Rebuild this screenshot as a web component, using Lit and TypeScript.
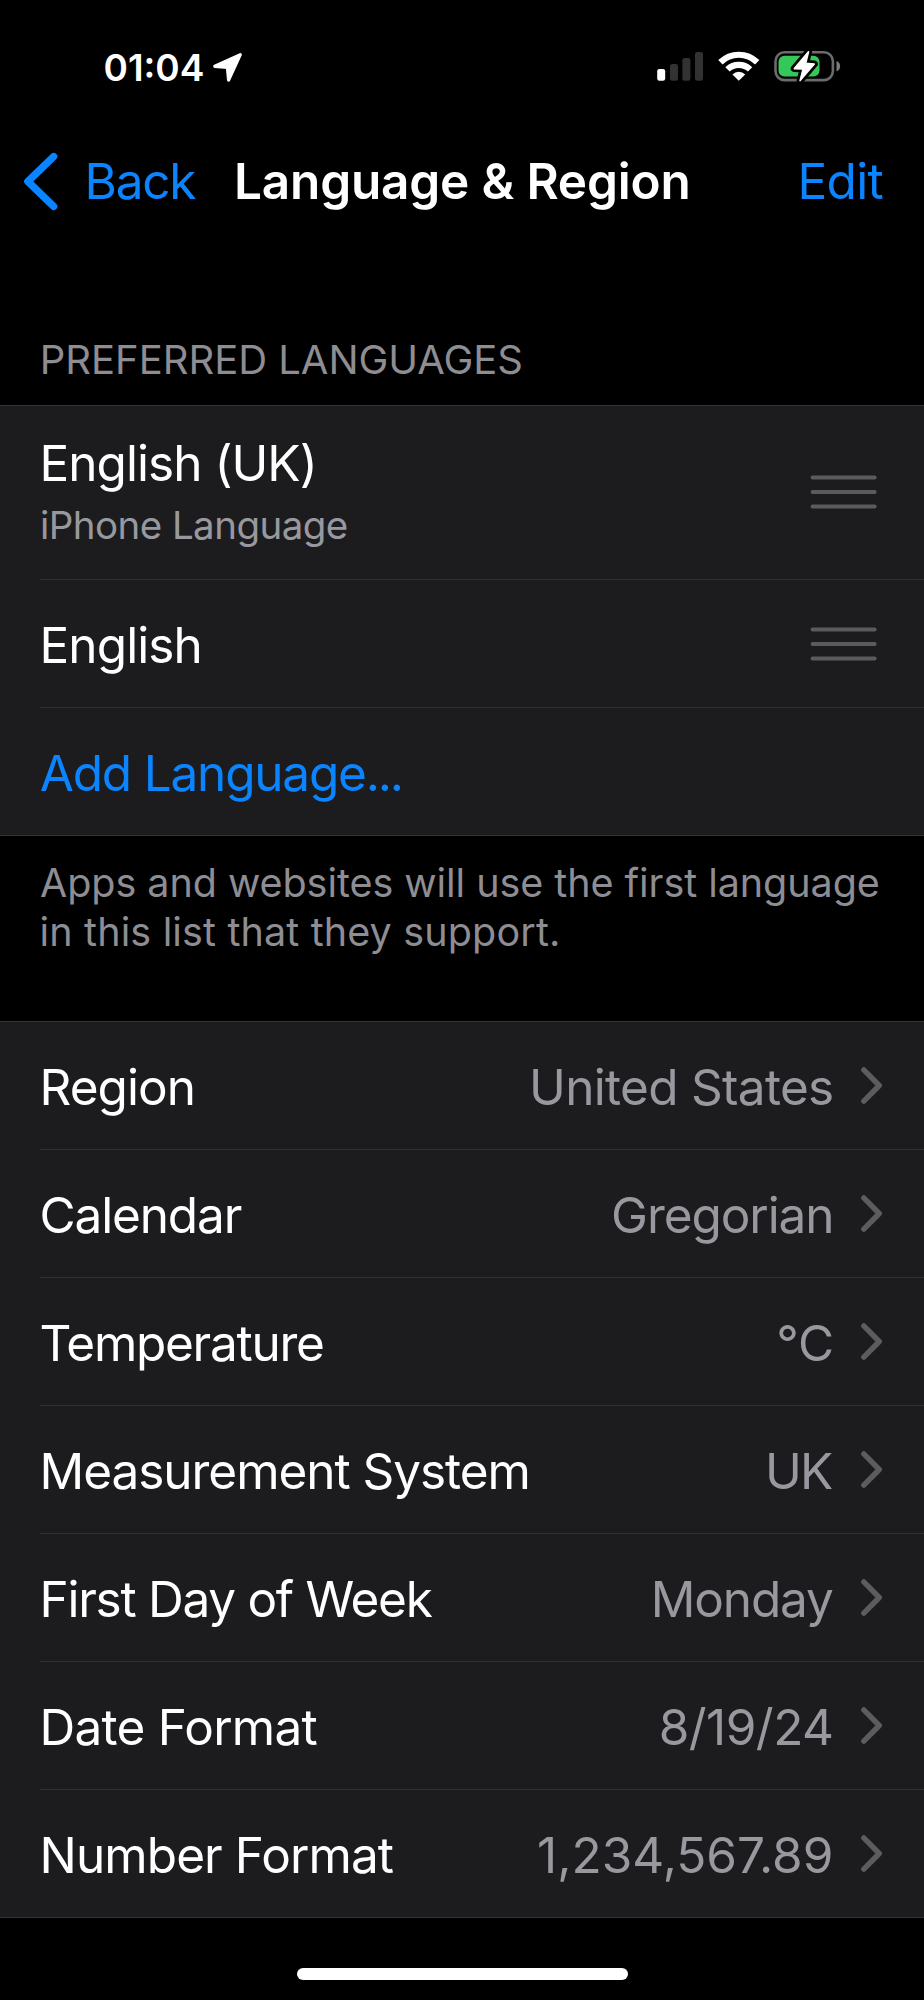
import { LitElement, html, svg, css, nothing } from "lit";
import { customElement, property } from "lit/decorators.js";
import { styleMap } from "lit/directives/style-map.js";

interface Setting {
  label: string;
  labelTracking: number;
  value: string;
  valueTracking: number;
  inset?: number;
}

const SETTINGS: Setting[] = [
  { label: "Region", labelTracking: -0.95, value: "United States", valueTracking: -0.7 },
  { label: "Calendar", labelTracking: -1.14, value: "Gregorian", valueTracking: -1.07 },
  { label: "Temperature", labelTracking: -1.27, value: "°C", valueTracking: -0.2, inset: -0.5 },
  { label: "Measurement System", labelTracking: -1.04, value: "UK", valueTracking: -1.8, inset: 2 },
  { label: "First Day of Week", labelTracking: -1.27, value: "Monday", valueTracking: -1.2, inset: 1 },
  { label: "Date Format", labelTracking: -0.76, value: "8/19/24", valueTracking: -0.53 },
  { label: "Number Format", labelTracking: -0.9, value: "1,234,567.89", valueTracking: 0.03 },
];

@customElement("status-bar")
class StatusBar extends LitElement {
  static styles = css`
    :host {
      display: flex;
      align-items: flex-start;
      box-sizing: border-box;
      height: 151px;
      padding: 45px 80px 0 103.5px;
      color: #fff;
    }
    svg { display: block; flex: none; }
    .time { font-size: 37px; font-weight: 600; line-height: 45px; width: 107.5px; }
    .arrow { margin-top: 6px; }
    .icons { display: flex; gap: 13px; margin: 3px 0 0 auto; }
  `;

  render() {
    return html`
      <span class="time">01:04</span>
      <svg class="arrow" width="34" height="34" viewBox="211 51 34 34">
        <path d="M240.3 54.6 L214.8 66.3 L227.4 67.3 L228.6 80.2 Z" fill="#fff" stroke="#fff" stroke-width="3.2" stroke-linejoin="round" />
      </svg>
      <div class="icons">
        <svg width="48" height="36" viewBox="656 48 48 36">
          <rect x="657.2" y="69" width="8" height="11.8" rx="2.2" fill="#fff" />
          <rect x="670" y="64" width="8" height="16.8" rx="2.2" fill="#323232" />
          <rect x="682.4" y="58" width="8" height="22.8" rx="2.2" fill="#323232" />
          <rect x="695" y="52" width="8" height="28.8" rx="2.2" fill="#323232" />
        </svg>
        <svg width="44" height="36" viewBox="717 48 44 36" fill="none" stroke="#fff">
          <path d="M720.4 62.3 A26.2 26.2 0 0 1 757.2 62.3" stroke-width="6.2" />
          <path d="M727.5 69.4 A16.2 16.2 0 0 1 750.1 69.4" stroke-width="6.2" />
          <path d="M738.8 80.8 L732.4 74.4 A9.2 9.2 0 0 1 745.2 74.4 Z" fill="#fff" stroke="none" />
        </svg>
        <svg width="70" height="36" viewBox="774.5 48 70 36">
          <rect x="776" y="52.3" width="57.4" height="27.8" rx="9" fill="none" stroke="#6b6b6b" stroke-width="2.6" />
          <path d="M837 61 Q840.6 62.4 840.6 66.2 Q840.6 70 837 71.4 Z" fill="#7c7c7c" />
          <rect x="779" y="55.8" width="41" height="20.8" rx="6" fill="#34c759" />
          <path
            d="M809 51.8 L794.8 68.6 L803.6 69 L800.6 80.6 L814.8 64 L806.2 63.4 Z"
            fill="#000" stroke="#000" stroke-width="7" stroke-linejoin="round" />
          <path
            d="M809 51.8 L794.8 68.6 L803.6 69 L800.6 80.6 L814.8 64 L806.2 63.4 Z"
            fill="#fff" stroke="#fff" stroke-width="1.6" stroke-linejoin="round" />
        </svg>
      </div>
    `;
  }
}

@customElement("nav-bar")
class NavBar extends LitElement {
  static styles = css`
    :host {
      display: flex;
      align-items: center;
      height: 60px;
      padding-left: 22px;
      line-height: 60px;
      font-size: 49.5px;
      white-space: nowrap;
      color: #0a84ff;
    }
    svg { display: block; flex: none; }
    .back { width: 149.5px; padding-left: 22.5px; letter-spacing: -1.2px; }
    .title { width: 563.5px; color: #fff; font-weight: 600; letter-spacing: -0.18px; }
    .edit { letter-spacing: -0.65px; }
  `;

  render() {
    return html`
      <svg width="40" height="60" viewBox="22 151.3 40 60">
        <path d="M53.6 156.9 L27.9 181.8 L53.6 206.7" fill="none" stroke="#0a84ff" stroke-width="7.4" stroke-linecap="round" stroke-linejoin="round" />
      </svg>
      <span class="back">Back</span>
      <span class="title">Language &amp; Region</span>
      <span class="edit">Edit</span>
    `;
  }
}

@customElement("list-row")
class ListRow extends LitElement {
  @property() label = "";
  @property({ type: Number }) tracking = 0;
  @property() detail = "";
  @property() value = "";
  @property({ type: Number }) valueTracking = 0;
  @property({ type: Number }) inset = 0;
  @property() accessory: "grip" | "chevron" | "none" = "none";

  static styles = css`
    :host {
      display: flex;
      align-items: center;
      box-sizing: border-box;
      height: 128px;
      margin-left: 40px;
      padding-right: 40px;
      border-top: 1px solid #303033;
      font-size: 49.5px;
      line-height: 60px;
      white-space: nowrap;
      color: #fff;
    }
    :host(:first-of-type) { border-top: 0; height: 127px; }
    :host([tall]) { height: 173px; }
    :host([link]) { color: #0a84ff; }
    .text { margin-left: -0.5px; padding-top: 3px; }
    :host([tall]) .text { padding-top: 0; margin-top: -5px; }
    :host([link]) .text { margin-left: -0.2px; }
    .dots { letter-spacing: -2.3px; }
    .detail {
      margin: 9px 0 0 0.4px;
      font-size: 38.5px;
      line-height: 46px;
      letter-spacing: -0.54px;
      color: #98989f;
    }
    .value { margin-left: auto; padding-top: 3px; color: #98989f; }
    svg { display: block; flex: none; }
    .grip { margin: 1px 5px 0 auto; }
    :host([tall]) .grip { margin-top: -2px; }
    .chevron { margin-left: 25.5px; }
  `;

  render() {
    const dotted = this.label.endsWith("...");
    const text = dotted ? this.label.slice(0, -3) : this.label;
    return html`
      <div class="text">
        <div style=${styleMap({ letterSpacing: `${this.tracking}px` })}>${text}${dotted ? html`<span class="dots">...</span>` : nothing}</div>
        ${this.detail ? html`<div class="detail">${this.detail}</div>` : nothing}
      </div>
      ${this.value
        ? html`<div class="value" style=${styleMap({ letterSpacing: `${this.valueTracking}px`, transform: `translateX(${-this.inset}px)` })}>${this.value}</div>`
        : nothing}
      ${this.accessory === "grip"
        ? html`<svg class="grip" width="70" height="36" viewBox="809 473.4 70 36">
            ${[477, 491.5, 506].map(
              (y) => svg`<path d=${`M812.6 ${y} H874.6`} stroke="#5b5b5f" stroke-width="4" stroke-linecap="round" />`
            )}
          </svg>`
        : nothing}
      ${this.accessory === "chevron"
        ? html`<svg class="chevron" width="25" height="41" viewBox="859 1065 25 41">
            <path d="M863.8 1069.9 L879.3 1085.5 L863.8 1101.1" fill="none" stroke="#5b5b60" stroke-width="5.4" stroke-linecap="round" stroke-linejoin="round" />
          </svg>`
        : nothing}
    `;
  }
}

@customElement("app-root")
class AppRoot extends LitElement {
  static styles = css`
    :host {
      display: flex;
      flex-direction: column;
      box-sizing: border-box;
      width: 924px;
      height: 2000px;
      overflow: hidden;
      background: #000;
      font-family: "Inter", "Liberation Sans", sans-serif;
    }
    .heading {
      padding: 124px 0 21px 39.8px;
      font-size: 40px;
      line-height: 49px;
      letter-spacing: -0.02px;
      color: #8d8d93;
    }
    .group {
      background: #1c1c1e;
      border-top: 1px solid #343437;
      border-bottom: 1px solid #343437;
    }
    .note {
      padding: 23px 0 64px 40px;
      font-size: 39.5px;
      line-height: 49px;
      letter-spacing: -0.05px;
      white-space: nowrap;
      color: #8d8d93;
    }
    .last { margin-left: -0.4px; letter-spacing: 0.15px; }
    .home {
      width: 330.5px;
      height: 12.3px;
      margin: 50px 0 0 297.2px;
      border-radius: 6.2px;
      background: #fff;
    }
  `;

  render() {
    return html`
      <status-bar></status-bar>
      <nav-bar></nav-bar>
      <div class="heading">PREFERRED LANGUAGES</div>
      <div class="group">
        <list-row tall label="English (UK)" .tracking=${-0.97} detail="iPhone Language" accessory="grip"></list-row>
        <list-row label="English" .tracking=${-0.9} accessory="grip"></list-row>
        <list-row link label="Add Language..." .tracking=${-1.2}></list-row>
      </div>
      <div class="note">
        <div>Apps and websites will use the first language</div>
        <div class="last">in this list that they support.</div>
      </div>
      <div class="group">
        ${SETTINGS.map(
          (s) => html`<list-row
            label=${s.label}
            .tracking=${s.labelTracking}
            value=${s.value}
            .valueTracking=${s.valueTracking}
            .inset=${s.inset ?? 0}
            accessory="chevron"
          ></list-row>`
        )}
      </div>
      <div class="home"></div>
    `;
  }
}
